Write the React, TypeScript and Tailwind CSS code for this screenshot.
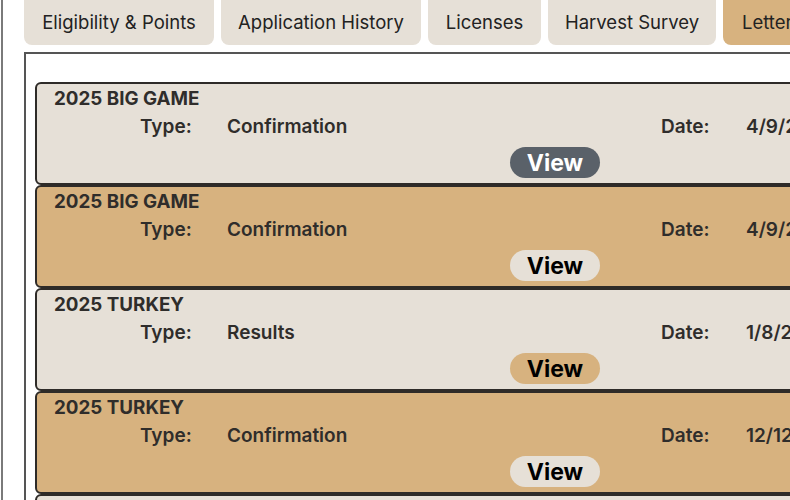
const tabs = [
  { label: "Eligibility & Points", w: "w-[190px]" },
  { label: "Application History", w: "w-[200px]" },
  { label: "Licenses", w: "w-[113px]" },
  { label: "Harvest Survey", w: "w-[168px]" },
  { label: "Letters", w: "w-[150px]", active: true },
];

const letters = [
  { title: "2025 BIG GAME", type: "Confirmation", date: "4/9/2025", tone: "light", btn: "gray" },
  { title: "2025 BIG GAME", type: "Confirmation", date: "4/9/2025", tone: "tan", btn: "light" },
  { title: "2025 TURKEY", type: "Results", date: "1/8/2025", tone: "light", btn: "tan" },
  { title: "2025 TURKEY", type: "Confirmation", date: "12/12/2024", tone: "tan", btn: "light" },
  { title: "2024 BIG GAME", type: "Results", date: "6/1/2024", tone: "light", btn: "tan" },
];

const btnClass: Record<string, string> = {
  gray: "bg-[#5a6169] text-white",
  light: "bg-[#e6e0d7] text-black",
  tan: "bg-[#d7b27f] text-black",
};

export default function App() {
  return (
    <div
      className="w-[790px] h-[500px] overflow-hidden bg-white"
      style={{ fontFamily: "Inter, 'Liberation Sans', sans-serif" }}
    >
      <div className="ml-[1px] h-[500px] flex flex-col border-l-2 border-[#7a7a7a] pl-[21px]">
        <div className="flex gap-[7px] -mt-[8px]">
          {tabs.map((t) => (
            <div
              key={t.label}
              className={`${t.w} shrink-0 h-[53px] pt-[9px] rounded-lg flex items-center justify-center text-[18.5px] text-[#222] ${
                t.active ? "bg-[#d7b27f] justify-start pl-[19px]" : "bg-[#e6e0d7]"
              }`}
            >
              {t.label}
            </div>
          ))}
        </div>

        <div className="mt-[7px] w-[1062px] shrink-0 border-2 border-[#555] px-[9px] pt-[28px]">
          {letters.map((l, i) => (
            <div
              key={i}
              className={`w-[1040px] border-2 border-[#2e2b28] rounded-md px-[17px] pt-[3px] pb-[5px] text-[#2f2d2b] ${
                l.tone === "tan" ? "bg-[#d7b27f]" : "bg-[#e6e0d7]"
              }`}
            >
              <div className="text-[18.8px] leading-[24px] font-bold">{l.title}</div>
              <div className="flex mt-[4px] text-[19px] leading-[24px] font-semibold">
                <div className="ml-[86px] w-[87px]">Type:</div>
                <div className="w-[434px]">{l.type}</div>
                <div className="w-[85px]">Date:</div>
                <div>{l.date}</div>
              </div>
              <div className="mt-[8px] flex justify-center">
                <button
                  className={`w-[90px] h-[31px] pt-[1px] rounded-full text-[23px] leading-none font-bold ${btnClass[l.btn]}`}
                >
                  View
                </button>
              </div>
            </div>
          ))}
        </div>
      </div>
    </div>
  );
}
